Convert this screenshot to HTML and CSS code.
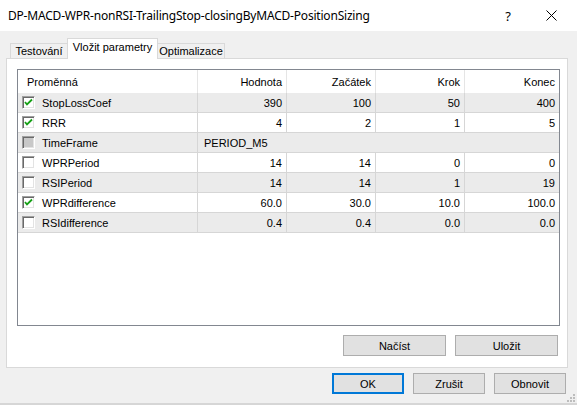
FILE: index.html
```html
<!DOCTYPE html>
<html>
<head>
<meta charset="utf-8">
<link rel="stylesheet" href="styles.css">
</head>
<body>
<div class="window">
  <div class="titlebar">
    <span class="title">DP-MACD-WPR-nonRSI-TrailingStop-closingByMACD-PositionSizing</span>
    <span class="help">?</span>
    <svg class="close" width="11" height="11" viewBox="0 0 11 11"><path d="M0.5 0.5 L10.5 10.5 M10.5 0.5 L0.5 10.5" stroke="#000" stroke-width="1" fill="none"/></svg>
  </div>
  <div class="tabs">
    <div class="tab tab-first">Testování</div>
    <div class="tab tab-active">Vložit parametry</div>
    <div class="tab tab-last">Optimalizace</div>
  </div>
  <div class="panel">
    <div class="grid">
      <div class="row head">
        <div class="cell name">Proměnná</div>
        <div class="cell num">Hodnota</div>
        <div class="cell num">Začátek</div>
        <div class="cell num">Krok</div>
        <div class="cell num">Konec</div>
      </div>
      <div class="row odd">
        <div class="cell name"><span class="cb checked"><svg width="13" height="13" viewBox="0 0 13 13"><path d="M3 6 L5 8.5 L10 3.5" stroke="#16a016" stroke-width="1.8" fill="none"/></svg></span>StopLossCoef</div>
        <div class="cell num">390</div><div class="cell num">100</div><div class="cell num">50</div><div class="cell num">400</div>
      </div>
      <div class="row">
        <div class="cell name"><span class="cb checked"><svg width="13" height="13" viewBox="0 0 13 13"><path d="M3 6 L5 8.5 L10 3.5" stroke="#16a016" stroke-width="1.8" fill="none"/></svg></span>RRR</div>
        <div class="cell num">4</div><div class="cell num">2</div><div class="cell num">1</div><div class="cell num">5</div>
      </div>
      <div class="row odd">
        <div class="cell name"><span class="cb disabled"></span>TimeFrame</div>
        <div class="cell span">PERIOD_M5</div>
      </div>
      <div class="row">
        <div class="cell name"><span class="cb"></span>WPRPeriod</div>
        <div class="cell num">14</div><div class="cell num">14</div><div class="cell num">0</div><div class="cell num">0</div>
      </div>
      <div class="row odd">
        <div class="cell name"><span class="cb"></span>RSIPeriod</div>
        <div class="cell num">14</div><div class="cell num">14</div><div class="cell num">1</div><div class="cell num">19</div>
      </div>
      <div class="row">
        <div class="cell name"><span class="cb checked"><svg width="13" height="13" viewBox="0 0 13 13"><path d="M3 6 L5 8.5 L10 3.5" stroke="#16a016" stroke-width="1.8" fill="none"/></svg></span>WPRdifference</div>
        <div class="cell num">60.0</div><div class="cell num">30.0</div><div class="cell num">10.0</div><div class="cell num">100.0</div>
      </div>
      <div class="row odd">
        <div class="cell name"><span class="cb"></span>RSIdifference</div>
        <div class="cell num">0.4</div><div class="cell num">0.4</div><div class="cell num">0.0</div><div class="cell num">0.0</div>
      </div>
    </div>
    <div class="panel-buttons">
      <button class="btn wide">Načíst</button>
      <button class="btn wide">Uložit</button>
    </div>
  </div>
  <div class="dialog-buttons">
    <button class="btn default">OK</button>
    <button class="btn">Zrušit</button>
    <button class="btn">Obnovit</button>
  </div>
  <div class="bottom-line"></div>
  <svg class="grip" width="10" height="10" viewBox="0 0 10 10">
    <rect x="7" y="1" width="2" height="2" fill="#bdbdbd"/>
    <rect x="4" y="4" width="2" height="2" fill="#bdbdbd"/>
    <rect x="7" y="4" width="2" height="2" fill="#bdbdbd"/>
    <rect x="1" y="7" width="2" height="2" fill="#bdbdbd"/>
    <rect x="4" y="7" width="2" height="2" fill="#bdbdbd"/>
    <rect x="7" y="7" width="2" height="2" fill="#bdbdbd"/>
  </svg>
</div>
</body>
</html>
```
FILE: styles.css
```css
* { box-sizing: border-box; }
html, body { margin: 0; padding: 0; }
body {
  width: 577px;
  height: 405px;
  overflow: hidden;
  background: #f0f0f0;
  font-family: "Liberation Sans", Arial, sans-serif;
  font-size: 11px;
  color: #000;
}
.window {
  position: relative;
  width: 577px;
  height: 405px;
  display: flex;
  flex-direction: column;
}
.titlebar {
  height: 31px;
  background: #fff;
  display: flex;
  align-items: center;
  padding-left: 8px;
  flex: none;
}
.title {
  font-family: "Noto Sans", "Open Sans", sans-serif;
  font-size: 12px;
  letter-spacing: -0.2px;
  color: #000;
}
.help {
  margin-left: auto;
  font-family: "Noto Sans", sans-serif;
  font-size: 13px;
  margin-right: 35px;
}
.close {
  margin-right: 20px;
}
.tabs {
  margin-top: 7px;
  height: 20px;
  display: flex;
  align-items: flex-end;
  padding-left: 10px;
  flex: none;
}
.tab {
  height: 15px;
  border: 1px solid #d9d9d9;
  border-bottom: none;
  background: #f0f0f0;
  text-align: center;
  line-height: 14px;
}
.tab-first { width: 57px; border-right: none; }
.tab-last { width: 67px; border-left: none; }
.tab-active {
  position: relative;
  z-index: 1;
  width: 91px;
  height: 21px;
  margin-bottom: -1px;
  background: #fff;
  line-height: 17px;
}
.panel {
  margin: 0 9px 0 6px;
  height: 310px;
  border: 1px solid #d9d9d9;
  background: #fff;
  padding: 10px 7px 0 10px;
  flex: none;
}
.grid {
  height: 257px;
  border: 1px solid #828790;
  background: #fff;
}
.row {
  display: grid;
  grid-template-columns: 180px 89px 89px 89px 1fr;
  height: 20px;
  border-bottom: 1px solid #d6d6d6;
}
.row.odd { background: #ebebeb; }
.row.head {
  height: 23px;
  border-bottom: none;
}
.cell {
  display: flex;
  align-items: center;
  border-right: 1px solid #d6d6d6;
  white-space: nowrap;
  overflow: hidden;
}
.cell:last-child { border-right: none; }
.head .cell { border-right-color: #e5e5e5; }
.cell.name { padding-left: 4px; }
.head .cell.name { padding-left: 9px; }
.cell.num { justify-content: flex-end; padding-right: 4px; }
.head .cell.num { padding-right: 4px; }
.cell.span {
  grid-column: 2 / 6;
  padding-left: 6px;
}
.cb {
  width: 13px;
  height: 13px;
  flex: none;
  margin-right: 7px;
  background: #fff;
  border-top: 1px solid #a0a0a0;
  border-left: 1px solid #a0a0a0;
  border-right: 1px solid #fff;
  border-bottom: 1px solid #fff;
  box-shadow: inset 1px 1px 0 #696969, inset -1px -1px 0 #e3e3e3;
  position: relative;
}
.cb svg {
  position: absolute;
  left: -1px;
  top: -1px;
}
.cb.disabled { background: #c8c8c8; }
.panel-buttons {
  margin-top: 9px;
  display: flex;
  justify-content: flex-end;
  gap: 9px;
  padding-right: 2px;
}
.btn {
  font-family: "Liberation Sans", Arial, sans-serif;
  font-size: 11px;
  color: #000;
  background: #e1e1e1;
  border: 1px solid #adadad;
  height: 21px;
  width: 72px;
  padding: 0;
  margin: 0;
}
.btn.wide { width: 103px; }
.btn.default { border: 2px solid #0078d7; }
.dialog-buttons {
  margin-top: 5px;
  display: flex;
  justify-content: flex-end;
  gap: 9px;
  padding-right: 11px;
  flex: none;
}
.bottom-line {
  margin-top: auto;
  height: 2px;
  background: #d6d6d6;
  flex: none;
}
.grip {
  position: absolute;
  right: 1px;
  bottom: 2px;
}
```
